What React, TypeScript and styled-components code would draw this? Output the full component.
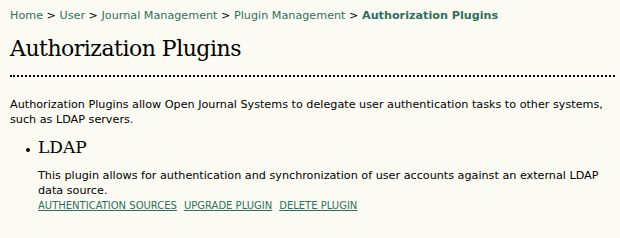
import styled, { createGlobalStyle } from "styled-components";

const GlobalStyle = createGlobalStyle`
  html, body {
    margin: 0;
    background-color: #fbfbf3;
  }
  body {
    font-family: "DejaVu Sans", Verdana, sans-serif;
    font-size: 11.2px;
    color: #000;
  }
`;

const Page = styled.div`
  padding: 9px 5px 0 10px;
`;

const Breadcrumb = styled.div`
  line-height: 14px;
  color: #000;
`;

const Crumb = styled.a<{ $current?: boolean }>`
  color: #2e7060;
  text-decoration: none;
  font-weight: ${(p) => (p.$current ? "bold" : "normal")};
`;

const Title = styled.h2`
  font-family: "DejaVu Serif", Georgia, serif;
  font-weight: normal;
  font-size: 22px;
  letter-spacing: -0.5px;
  line-height: 28px;
  margin: 12px 0 0;
  padding-bottom: 12px;
  border-bottom: 2px dotted #000;
`;

const Intro = styled.p`
  margin: 20px 0 0;
  line-height: 15px;
`;

const PluginList = styled.ul`
  margin: 9px 0 0;
  padding-left: 16px;
  list-style: none;
`;

const PluginItem = styled.li`
  position: relative;
  &::before {
    content: "";
    position: absolute;
    left: 0;
    top: 12px;
    width: 4px;
    height: 4px;
    border-radius: 50%;
    background: #000;
  }
`;

const PluginName = styled.h4`
  font-family: "DejaVu Serif", Georgia, serif;
  font-weight: normal;
  font-size: 17px;
  line-height: 22px;
  margin: 0 0 0 12px;
`;

const PluginBody = styled.div`
  margin: 10px 0 0 12px;
`;

const Description = styled.p`
  margin: 0;
  line-height: 15px;
`;

const Actions = styled.div`
  display: flex;
  gap: 7px;
  margin-top: 1px;
`;

const Action = styled.a`
  font-size: 10px;
  line-height: 14px;
  text-transform: uppercase;
  color: #2e7060;
  text-decoration: underline;
`;

export default function App() {
  return (
    <>
      <GlobalStyle />
      <Page>
        <Breadcrumb>
          <Crumb href="#">Home</Crumb> &gt; <Crumb href="#">User</Crumb> &gt;{" "}
          <Crumb href="#">Journal Management</Crumb> &gt;{" "}
          <Crumb href="#">Plugin Management</Crumb> &gt;{" "}
          <Crumb href="#" $current>
            Authorization Plugins
          </Crumb>
        </Breadcrumb>
        <Title>Authorization Plugins</Title>
        <Intro>
          Authorization Plugins allow Open Journal Systems to delegate user
          authentication tasks to other systems, such as LDAP servers.
        </Intro>
        <PluginList>
          <PluginItem>
            <PluginName>LDAP</PluginName>
            <PluginBody>
              <Description>
                This plugin allows for authentication and synchronization of
                user accounts against an external LDAP data source.
              </Description>
              <Actions>
                <Action href="#">Authentication Sources</Action>
                <Action href="#">Upgrade Plugin</Action>
                <Action href="#">Delete Plugin</Action>
              </Actions>
            </PluginBody>
          </PluginItem>
        </PluginList>
      </Page>
    </>
  );
}
